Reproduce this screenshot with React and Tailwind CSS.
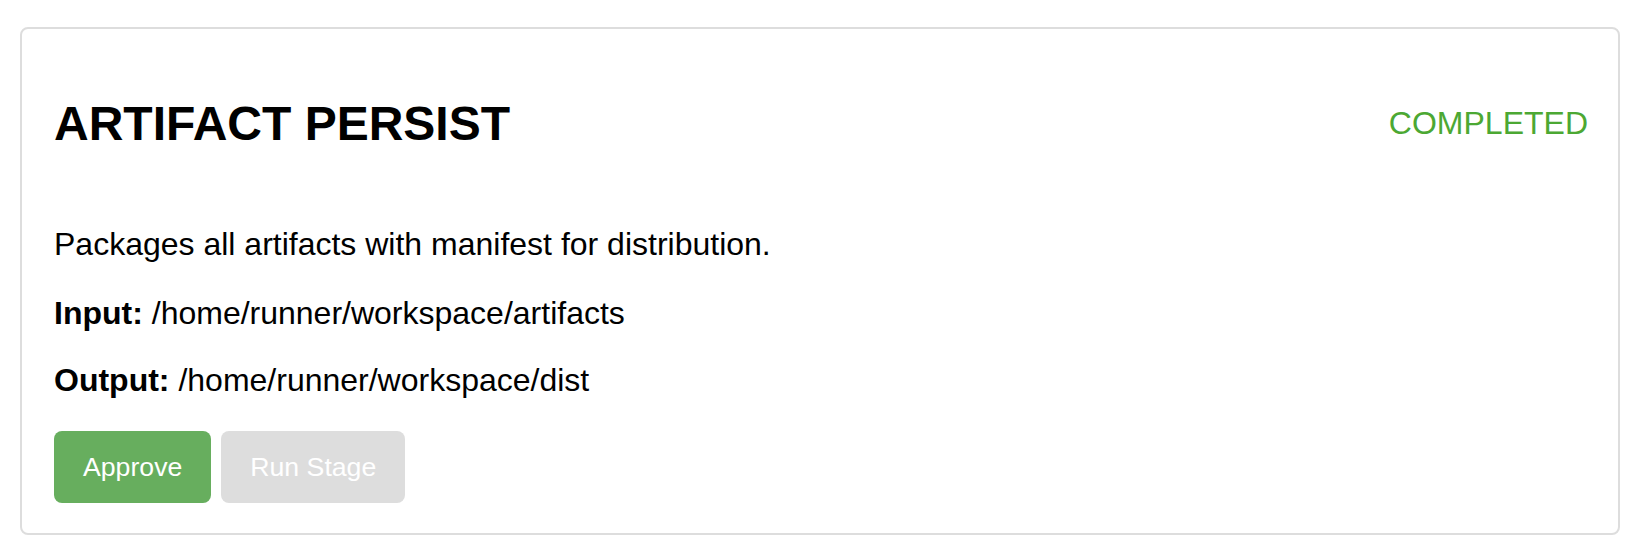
import React from 'react'

const StageCard = ({ title, status, description, input, output }) => {
  return (
    <div className="ml-[20px] mt-[27px] w-[1600px] border-2 border-[#ddd] rounded-lg bg-white px-8 pt-8 pb-[30px]">
      <div className="flex justify-between items-center mt-[35px] mb-[75px]">
        <h2 className="text-[48px] leading-[55px] font-bold text-black">{title}</h2>
        <span className="text-[32px] leading-[37px] text-[#4ca833] mr-[-2px]">{status}</span>
      </div>

      <p className="text-[32px] leading-[37px] text-black">{description}</p>
      <p className="text-[32px] leading-[37px] text-black mt-[32px]">
        <strong>Input:</strong> {input}
      </p>
      <p className="text-[32px] leading-[37px] text-black mt-[30px]">
        <strong>Output:</strong> {output}
      </p>

      <div className="flex gap-[10px] mt-[32px]">
        <button className="bg-[#67ae5e] text-white text-[26.67px] leading-[30px] px-[29px] py-[21px] rounded-lg">
          Approve
        </button>
        <button className="bg-[#ddd] text-white text-[26.67px] leading-[30px] px-[29px] py-[21px] rounded-lg" disabled>
          Run Stage
        </button>
      </div>
    </div>
  )
}

const App = () => {
  return (
    <div className="min-h-[558px] bg-white font-['Liberation_Sans',Arial,sans-serif]">
      <StageCard
        title="ARTIFACT PERSIST"
        status="COMPLETED"
        description="Packages all artifacts with manifest for distribution."
        input="/home/runner/workspace/artifacts"
        output="/home/runner/workspace/dist"
      />
    </div>
  )
}

export default App
